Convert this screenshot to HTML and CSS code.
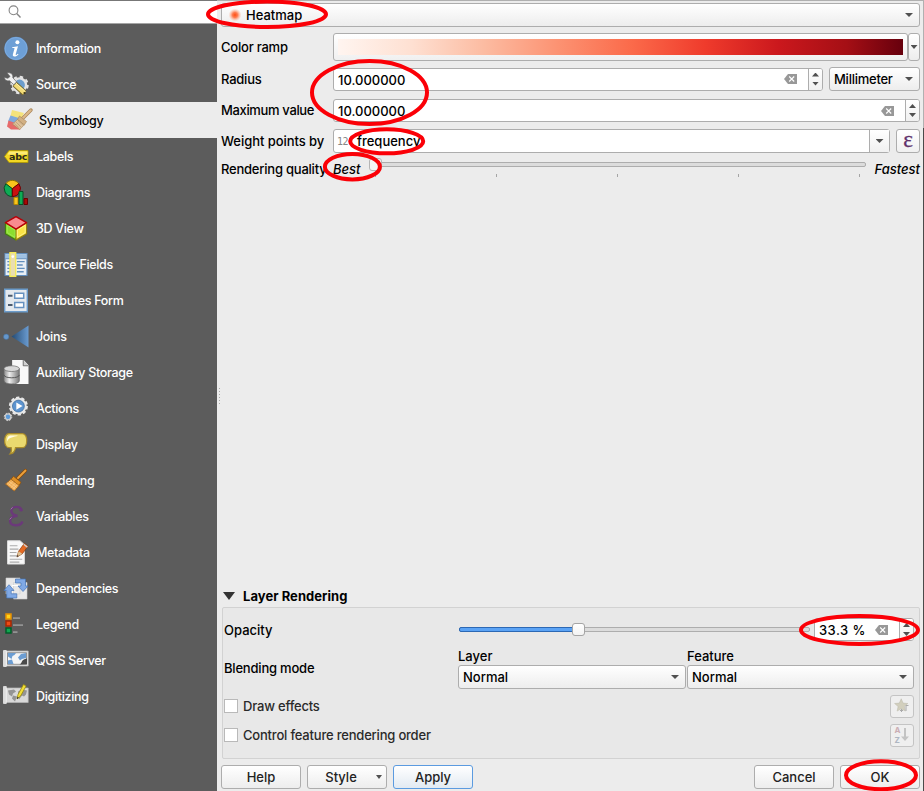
FILE: index.html
```
<!DOCTYPE html>
<html lang="en">
<head>
<meta charset="utf-8">
<title>Layer Properties</title>
<link rel="stylesheet" href="styles.css">
</head>
<body>
<svg class="defs" width="0" height="0" aria-hidden="true">
  <defs>
    <linearGradient id="gj"><stop offset="0" stop-color="#244b74"/><stop offset="1" stop-color="#6a9bd0"/></linearGradient>
    <linearGradient id="gc"><stop offset="0" stop-color="#8b8b8b"/><stop offset=".35" stop-color="#eee"/><stop offset="1" stop-color="#777"/></linearGradient>
    <radialGradient id="gh"><stop offset="0" stop-color="#ff4d12"/><stop offset=".4" stop-color="#ff7040" stop-opacity=".9"/><stop offset="1" stop-color="#ffb090" stop-opacity="0"/></radialGradient>
    <symbol id="clear" viewBox="0 0 13 10"><path d="M4 0H13V10H4L0 5Z" fill="#989898"/><path d="M5.2 2.5l5 5M10.2 2.5l-5 5" stroke="#fff" stroke-width="1.1"/></symbol>
  </defs>
</svg>
<div class="window">
  <nav class="sidebar">
    <div class="search"><svg width="14" height="14" viewBox="0 0 14 14" fill="none" stroke="#858585"><circle cx="5.5" cy="5.3" r="4.4" stroke-width="1.1"/><path d="M8.7 8.6l3.8 3.9" stroke-width="1.4"/></svg></div>
    <ul class="pages">
      <li><svg class="ico" viewBox="0 0 24 24"><circle cx="12" cy="12" r="11.7" fill="#5b8fcb"/><circle cx="12" cy="12" r="11" fill="#6d9fd6" stroke="#85b0df" stroke-width=".8"/><circle cx="13.4" cy="5.8" r="2" fill="#fff"/><path d="M8.2 10.8l5.8-1-2.3 8c-.2 1 .5 1 2.2-.5l.6.7c-2 2.3-6.5 3.2-5.6-.2l1.6-5.7c.2-.6-.5-.7-2.3-.5z" fill="#fff"/></svg><span>Information</span></li>
      <li><svg class="ico" viewBox="0 0 24 24"><circle cx="15.5" cy="12.5" r="6.6" fill="#6c9dcc" stroke="#e3e3e3" stroke-width="2.4"/><circle cx="15.5" cy="12.5" r="8.2" fill="none" stroke="#e3e3e3" stroke-width="2" stroke-dasharray="3.4 3.04"/><path d="M10.5 11.5l10 9" stroke="#7a6928" stroke-width="6"/><path d="M11 12l9.5 8.5" stroke="#f3dc78" stroke-width="4.2"/><path d="M11.5 10.2l9.3 8.4" stroke="#fff2ac" stroke-width="1"/><circle cx="20.5" cy="20.5" r="1.1" fill="#413713"/><path d="M3 .5C7-.5 9.3 2 8.8 5.2l3.8 4.2-2.8 2.8-4.3-4C2.7 9 .5 7.2.2 5l3.7.8 2.2-1.9z" fill="#f0f0f0" stroke="#666" stroke-width=".7"/></svg><span>Source</span></li>
      <li class="selected"><svg class="ico" viewBox="0 0 24 24"><path d="M5 1.5l12 3-4 8-10-3z" fill="#f5e37b"/><path d="M3.5 7l10 3-3 6L1 13z" fill="#7fa9dd"/><path d="M1.5 12l9 3.5 3 5.5H4L0 18z" fill="#e66a6a"/><path d="M16 9.5L24 1.5" stroke="#a88457" stroke-width="3.4" stroke-linecap="round"/><path d="M16 9.5L23.7 1.8" stroke="#dcb98b" stroke-width="2.2" stroke-linecap="round"/><path d="M12.5 7.5l7 5.5-2.2 3.5L10.5 11z" fill="#d2b083" stroke="#a88457" stroke-width=".6"/><path d="M10.5 11l6.7 5.4-4.5 4.6-7.2-5.4z" fill="#dcc09a" stroke="#a88457" stroke-width=".6"/><path d="M9 13.5l5 5M7.2 15l4.5 4M11 12l5 4.7" stroke="#b6946a" stroke-width=".6"/></svg><span>Symbology</span></li>
      <li><svg class="ico" viewBox="0 0 24 24"><path d="M5 6h19v12H5L.5 12z" fill="#f2d724" stroke="#b39a00" stroke-width=".8"/><path d="M5.5 7h18v3h-20z" fill="#fff08a" opacity=".8"/><text x="14" y="15.4" text-anchor="middle" class="abc">abc</text></svg><span>Labels</span></li>
      <li><svg class="ico" viewBox="0 0 24 24"><g stroke-width="1"><path d="M8.3 8.2L1.8 3.2A8 8 0 0 1 14.8 3.2z" fill="#f9c51c" stroke="#8d7300"/><path d="M8.3 8.2V16A8 8 0 0 1 1.8 3.2z" fill="#0eac55" stroke="#074f27"/><path d="M8.3 8.2V16A8 8 0 0 0 14.8 3.2z" fill="#ca1010" stroke="#690000"/><path d="M10 17h4v7h-4z" fill="#f9c51c" stroke="#b98900"/><path d="M15 11h4v13h-4z" fill="#0eac55" stroke="#074f27"/><path d="M20 18h3.5v6H20z" fill="#a80808" stroke="#690000"/></g></svg><span>Diagrams</span></li>
      <li><svg class="ico" viewBox="0 0 24 26"><g stroke-width="1.2" stroke-linejoin="round"><path d="M1 7l11 6.5V25L1 18.5z" fill="#8bdd2e" stroke="#417e10"/><path d="M23 7l-11 6.5V25l11-6.5z" fill="#fae345" stroke="#94800b"/><path d="M12 .7L23 7l-11 6.7L1 7z" fill="#f88b8e" stroke="#b80008" stroke-width="1.5"/><path d="M3 9.7l8 5v7.5l-8-4.8z" fill="none" stroke="#a7ed60" stroke-width=".7"/><path d="M21.5 9.7l-8 5v7.5l8-4.8z" fill="none" stroke="#fff6a2" stroke-width=".7"/></g></svg><span>3D View</span></li>
      <li><svg class="ico" viewBox="0 0 24 26"><path d="M.6 1.6h22.8v22.8H.6z" fill="#e9eff5" stroke="#628fbe" stroke-width="1.2"/><path d="M1.2 2.2h21.6v4.6H1.2z" fill="#9fc1e3"/><path d="M1 7h22" stroke="#628fbe"/><path d="M3 10h3M13 10h8M3 13.5h3M13 13.5h6M3 17h3M13 17h8M3 20.5h3M13 20.5h7" stroke="#628fbe" stroke-width="1.4"/><path d="M5.7.7h6v24.6h-6z" fill="#e9deb0" stroke="#f6ec55" stroke-width="1.4"/><circle cx="8.7" cy="4.8" r="1.4" fill="#fff"/></svg><span>Source Fields</span></li>
      <li><svg class="ico" viewBox="0 0 24 24"><path d="M.7.7h22.6v22.6H.7z" fill="#e4e9ee" stroke="#6b9bca" stroke-width="1.4"/><path d="M10.7 4.7h9v5h-9zM10.7 13.9h9v5h-9z" fill="#fff" stroke="#6591c0" stroke-width="1.5"/><path d="M4 7.2h4.5M4 16.4h4.5" stroke="#4b5b6d" stroke-width="2"/></svg><span>Attributes Form</span></li>
      <li><svg class="ico" viewBox="0 0 24 24"><circle cx="2.2" cy="12.3" r="2.7" fill="#6697cb" stroke="#3f6d9c" stroke-width=".5"/><path d="M7.5 12L24.5 1v22z" fill="url(#gj)"/></svg><span>Joins</span></li>
      <li><svg class="ico" viewBox="0 0 24 26"><path d="M8 0h12l5 5.5V25H8z" fill="#f9f9f9"/><path d="M19.5 0v6H25" fill="#d0d0d0" stroke="#555" stroke-width=".8"/><path d="M-.5 9v12.5c0 4.5 16 4.5 16 0V9z" fill="url(#gc)" stroke="#656565" stroke-width=".7"/><ellipse cx="7.5" cy="9" rx="8" ry="3" fill="#d8d8d8" stroke="#666" stroke-width=".7"/><path d="M-.5 15.5c0 4 16 4 16 0" fill="none" stroke="#555"/></svg><span>Auxiliary Storage</span></li>
      <li><svg class="ico" viewBox="0 0 24 26"><circle cx="14.5" cy="10.5" r="7.3" fill="#6296cc" stroke="#e8e8e8" stroke-width="2.6"/><circle cx="14.5" cy="10.5" r="8.9" fill="none" stroke="#e8e8e8" stroke-width="2" stroke-dasharray="3.5 2.1"/><circle cx="14.5" cy="10.5" r="6.2" fill="#5d94cf" stroke="#39699a" stroke-width=".7"/><path d="M12.3 6.7l6.5 3.8-6.5 3.8z" fill="#fff"/><circle cx="3.7" cy="21.7" r="3" fill="#5d9bd8" stroke="#cfcfcf" stroke-width="1.3"/><circle cx="3.7" cy="21.7" r="3.9" fill="none" stroke="#ddd" stroke-dasharray="1.7 1.36"/></svg><span>Actions</span></li>
      <li><svg class="ico" viewBox="0 0 24 24"><path d="M5 1.2h13.5c6 0 5.3 14 0 14h-7c-.5 3.5-3 6-5.5 6.3 1.6-1.7 1.7-4 1.2-6.3H5C-.8 15.2-.8 1.2 5 1.2z" fill="#ead96f" stroke="#aa8c2a" stroke-width="1.2"/><path d="M3 9c0-4 1-6 4-6h7c-4 2-9 1-11 6z" fill="#fffbe0"/></svg><span>Display</span></li>
      <li><svg class="ico" viewBox="0 0 24 24"><path d="M14 9.5L21.5 2" stroke="#8a4a05" stroke-width="3.2" stroke-linecap="round"/><path d="M14 9.5L21.5 2" stroke="#eba03c" stroke-width="1.9" stroke-linecap="round"/><path d="M9.5 7.8l7.5 6-2 3.3-8-6.4z" fill="#de8f25" stroke="#8a4a05" stroke-width=".7"/><path d="M7 10.7l8 6.4-4.7 5.4-8.8-7z" fill="#f1ae55" stroke="#a8671a" stroke-width=".8"/><path d="M3.2 14.3l8.3 6.4M5 12.8l8 6.3M9.3 12.6L4.8 17M11.5 14.4L7 19.2M13.2 16l-4.5 5" stroke="#fad096" stroke-width=".6"/></svg><span>Rendering</span></li>
      <li><svg class="ico" viewBox="0 0 24 24"><path d="M17.8 6.4C17 .9 7.4 1.3 7.4 6.3c0 3 2.6 4.6 6.1 4.9-4.6.3-7.4 2-7.4 5.4 0 5.3 10.4 5.6 12.4.4" fill="none" stroke="#6b397a" stroke-width="2.4"/><circle cx="16.9" cy="5.5" r="1.5" fill="#6b397a"/><path d="M6.8 4.8l1.8-2M5.6 14.8l2-1.8" stroke="#a983b2" stroke-width=".8"/></svg><span>Variables</span></li>
      <li><svg class="ico" viewBox="0 0 24 26"><path d="M3.2.8h13l4.5 4V25H3.2z" fill="#f8f8f8" stroke="#ddd"/><path d="M5.5 6h8M5.5 9.5h9M5.5 13h7M5.5 16.5h8M5.5 20h13M5.5 23h10" stroke="#aaa" stroke-width="1.2"/><path d="M13 17.7l1.7-6 6-8.3 3.8 3-6 8z" fill="#e56a24" stroke="#813708" stroke-width=".7"/><path d="M13 17.7l1.7-6 3.8 2.7z" fill="#ddc497"/><path d="M20 4.4l3.8 3" stroke="#ccc" stroke-width="1.5"/><path d="M13 17.7l.5-2 1.3 1z" fill="#222"/></svg><span>Metadata</span></li>
      <li><svg class="ico" viewBox="0 0 24 24"><path d="M2 1.5h14v16H2zM9.5 6H23v16.5H9.5z" fill="#e8e8e8" stroke="#ccc" stroke-width=".6"/><path d="M8 18V9h8" stroke="#fff" fill="none"/><g fill="#80a9e5" stroke="#4373b6" stroke-width=".7"><path d="M11.5 2.5h10v7H24l-5 5.5-5-5.5h3V6.5h-5.5z"/><path d="M12.8 21.5H2.7V14H0l5-5.8 5 5.8H7.2v3.3h5.6z"/></g></svg><span>Dependencies</span></li>
      <li><svg class="ico" viewBox="0 0 24 24"><path d="M2 1.5h5v5H2z" fill="#ffd21c" stroke="#e89100" stroke-width="1.5"/><path d="M2 8.5h5v5H2z" fill="#ed4b16" stroke="#a92800" stroke-width="1.5"/><path d="M2 15.5h5v5H2z" fill="#10a650" stroke="#005e29" stroke-width="1.5"/><path d="M9 5.7h7M9 12.7h10M9 19.7h4.5" stroke="#929292" stroke-width="1.8"/></svg><span>Legend</span></li>
      <li><svg class="ico" viewBox="0 0 24 24"><path d="M.2 2.5h24v15H.2z" fill="#e4e4e4" stroke="#b8b8b8" stroke-width=".7"/><path d="M3.5 4.2h19v11.6h-19z" fill="#f5f5f5" stroke="#555" stroke-width=".6"/><path d="M4 4.5h8l-1.5 2-2 1-1 3L4 8zM4 12l4-1 1.5 4.5H4zM14 9l3-3.5 5-1v5l-4 1-2 1.5z" fill="#6c9dd2"/><path d="M15.5 16c3-1 1-5 7.5-6v5.8z" fill="#4a4a4a"/><path d="M-.5 2h2.8v16H-.5z" fill="#ddd" stroke="#fff" stroke-width=".6"/></svg><span>QGIS Server</span></li>
      <li><svg class="ico" viewBox="0 0 24 24"><path d="M.2 3.5h24v14.5H.2z" fill="#d9d9d9" stroke="#b8b8b8" stroke-width=".7"/><path d="M4 6l6-1 2 2-3 2-1 3-3-2zM9 11l4 1-2 5-3-3zM14 7l4-2 5 1-1 4-2 2-2-1-3 4-1-4z" fill="#949494"/><path d="M-.5 2h2.8v17H-.5z" fill="#ddd" stroke="#fff" stroke-width=".6"/><path d="M13 14.5l1-4.5 5.5-10 2.6 1.5-5.5 10z" fill="#f2df38" stroke="#978710" stroke-width=".8"/><path d="M13 14.5l.4-2 1.5.8z" fill="#222"/></svg><span>Digitizing</span></li>
    </ul>
  </nav>

  <main class="panel">
    <div class="box combo renderer"><svg width="14" height="14" viewBox="0 0 14 14"><circle cx="7" cy="7" r="6.5" fill="url(#gh)"/></svg><span>Heatmap</span><i class="arrow"></i></div>

    <div class="row ramp-row"><label>Color ramp</label>
      <div class="box ramp"><div class="gradient"></div></div><div class="box ramp-menu"><i class="arrow"></i></div></div>
    <div class="row radius-row"><label>Radius</label>
      <div class="box spin"><span>10.000000</span><svg class="clear"><use href="#clear"/></svg><div class="steps"><i class="up"></i><i class="down"></i></div></div>
      <div class="box combo unit"><span>Millimeter</span><i class="arrow"></i></div></div>
    <div class="row max-row"><label>Maximum value</label>
      <div class="box spin"><span>10.000000</span><svg class="clear"><use href="#clear"/></svg><div class="steps"><i class="up"></i><i class="down"></i></div></div></div>
    <div class="row weight-row"><label>Weight points by</label>
      <div class="box field"><small>12</small><span>frequency</span><div class="drop"><i class="arrow"></i></div></div>
      <div class="box expr">ε</div></div>
    <div class="row quality-row"><label>Rendering quality</label>
      <em class="best">Best</em>
      <div class="quality"><div class="groove"></div><div class="ticks"><i></i><i></i><i></i><i></i><i></i></div><div class="knob"></div></div>
      <em>Fastest</em></div>

    <div class="space"><i></i><i></i><i></i><i></i><i></i><i></i></div>

    <h2><i class="fold"></i>Layer Rendering</h2>
    <section class="group">
      <div class="opacity-row"><label>Opacity</label>
        <div class="slider"><div class="fill"></div><div class="handle"></div></div>
        <div class="box spin percent"><span>33.3 %</span><svg class="clear"><use href="#clear"/></svg><div class="steps"><i class="up"></i><i class="down"></i></div></div></div>
      <div class="blend-row"><label>Blending mode</label>
        <div class="blend layer"><span>Layer</span><div class="box combo"><span>Normal</span><i class="arrow"></i></div></div>
        <div class="blend feature"><span>Feature</span><div class="box combo"><span>Normal</span><i class="arrow"></i></div></div></div>
      <div class="check-row"><i class="check"></i><span>Draw effects</span>
        <div class="box tool"><svg width="16" height="16" viewBox="0 0 16 16"><path d="M7.2.8l1.9 4.3 4.7.4-3.5 3 1 4.6-4.1-2.4-4.1 2.4 1-4.6-3.5-3 4.7-.4z" fill="#d2cfbd" stroke="#bbb8aa" stroke-width=".5"/><path d="M6 12.5h3M7.5 11v3M12 13V7.5h2.5" stroke="#aaa" fill="none"/></svg></div></div>
      <div class="check-row"><i class="check"></i><span>Control feature rendering order</span>
        <div class="box tool"><div class="az"><b>A</b><b>Z</b></div><svg width="8" height="14" viewBox="0 0 8 14"><path d="M3 0v8.5H0l4 4.5 4-4.5H5V0z" fill="#c3c3c3"/></svg></div></div>
    </section>
    <footer class="actions">
      <div class="box button">Help</div>
      <div class="box button style"><span>Style</span><i class="arrow"></i></div>
      <div class="box button apply">Apply</div>
      <div class="box button cancel">Cancel</div>
      <div class="box button ok">OK</div>
    </footer>
  </main>
  <svg class="marks" viewBox="0 0 924 791" fill="none" stroke="#fb0007" stroke-width="4">
    <ellipse cx="267" cy="14.3" rx="59" ry="12.7"/>
    <ellipse cx="369.5" cy="92.5" rx="57.5" ry="31.5"/>
    <ellipse cx="386.7" cy="141.3" rx="36.5" ry="12"/>
    <ellipse cx="352.4" cy="166.7" rx="27.5" ry="12.7"/>
    <ellipse cx="859.5" cy="630" rx="58.5" ry="14"/>
    <ellipse cx="881" cy="775.2" rx="35" ry="14"/>
  </svg>
</div>
</body>
</html>
```
FILE: styles.css
```
* { box-sizing: border-box; }
body { margin: 0; overflow: hidden; font: 500 13px/16px Inter, "Liberation Sans", sans-serif; color: #000; }
i { display: block; }
.defs { position: absolute; }
.window { position: relative; display: flex; width: 924px; height: 791px; background: #ececec; }

.sidebar { width: 217px; flex: none; background: #5c5c5c; border-top: 1px solid #777; }
.search { height: 23px; background: #fff; border-bottom: 1px solid #a5a5a5; padding: 4px 0 0 8px; }
.search svg { display: block; }
.pages { list-style: none; margin: 6px 0 0; padding: 0; }
.pages li { display: flex; align-items: center; gap: 8px; height: 36px; padding-left: 4px; color: #fff; font-size: 12.5px; letter-spacing: -.32px; }
.pages .selected { background: #ececec; color: #000; padding-left: 7px; }
.pages span { padding-top: 2px; }
.ico { width: 24px; height: 25px; overflow: visible; flex: none; }
.abc { font: 700 9.5px "DejaVu Sans", sans-serif; letter-spacing: -.3px; fill: #2b2b1c; }

.panel { width: 707px; flex: none; padding: 2px 4px 0; display: flex; flex-direction: column; border: 0 solid; border-width: 1px 1px 0 0; border-image: linear-gradient(#b0b0b0 128px, #4a4a4a 128px) 1; }
.box { border: 1px solid #adadad; border-radius: 3px; background: #fff; display: flex; align-items: center; }
.combo, .ramp-menu, .button { background: linear-gradient(#fff, #ededed); }
.arrow { width: 8px; height: 4px; background: #505050; clip-path: polygon(0 0, 100% 0, 50% 100%); flex: none; }
.combo .arrow { margin: 0 6px 0 auto; }
.renderer { height: 24px; padding-left: 6px; gap: 4px; margin-right: -1px; }
.row { display: flex; align-items: center; margin-right: -1px; }
.row label { width: 112px; flex: none; white-space: nowrap; letter-spacing: -.22px; }
.row.weight-row label { letter-spacing: -.05px; }
.ramp-row { height: 28px; margin-top: 6px; }
.ramp { width: 575px; height: 28px; padding: 0 4px; background: linear-gradient(#fff, #f0f0f0); }
.gradient { flex: 1; height: 16px; background: linear-gradient(90deg, #fff5f0, #fee0d2 13%, #fcbba1 26%, #fc9272 39%, #fb6a4a 52%, #ef3b2c 65%, #cb181d 78%, #a50f15 90%, #67000d); }
.ramp-menu { width: 12px; height: 28px; justify-content: center; }
.ramp-menu .arrow { width: 7px; }
.radius-row { height: 24px; margin-top: 6px; }
.radius-row .spin span { padding-top: 1px; }
.spin { flex: 1; height: 23px; padding-left: 4px; }
.clear { width: 13px; height: 10px; margin-left: auto; margin-right: 11px; flex: none; }
.steps { width: 14px; height: 100%; border-left: 1px solid #adadad; background: linear-gradient(#fff, #f0f0f0); border-radius: 0 2px 2px 0; display: flex; flex-direction: column; align-items: center; justify-content: center; gap: 5px; }
.up, .down { width: 7px; height: 4px; background: #505050; clip-path: polygon(50% 0, 100% 100%, 0 100%); }
.down { clip-path: polygon(0 0, 100% 0, 50% 100%); }
.unit { width: 91px; height: 24px; margin-left: 6px; padding-left: 4px; letter-spacing: -.25px; }
.max-row { height: 23px; margin-top: 8px; }
.max-row label { padding-bottom: 1px; letter-spacing: -.35px; }
.weight-row { height: 24px; margin-top: 7px; }
.field { width: 557px; height: 24px; padding-left: 3px; }
.field small { font: 10px "DejaVu Sans Mono", monospace; color: #888; letter-spacing: -.4px; width: 20px; }
.drop { margin-left: auto; width: 20px; height: 100%; border-left: 1px solid #adadad; display: flex; align-items: center; justify-content: center; background: linear-gradient(#fff, #f0f0f0); }
.expr { width: 24px; height: 24px; margin-left: 6px; justify-content: center; background: linear-gradient(#fff, #f0f0f0); color: #60316b; font: 23px/20px "Liberation Serif", serif; padding-bottom: 3px; -webkit-text-stroke: .3px #60316b; }
.quality-row { height: 24px; margin-top: 5px; align-items: flex-start; }
.quality-row label, .quality-row em { padding-top: 3px; }
.best { width: 37px; }
.quality { position: relative; width: 498px; height: 22px; margin-right: 8px; padding-top: 4px; }
.groove { height: 5px; border: 1px solid #adadad; border-radius: 2px; background: #dcdcdc; }
.ticks { display: flex; justify-content: space-between; margin: 7px 6px 0 5px; }
.ticks i { width: 1px; height: 3px; background: #a5a5a5; }
.knob { position: absolute; left: -1px; top: 0; width: 13px; height: 13px; border: 1px solid #b5b5b5; border-radius: 3px; background: #f5f5f5; }
.space { flex: 1; margin-left: -2px; padding-top: 24px; display: flex; flex-direction: column; justify-content: center; gap: 2px; }
.space i { width: 1px; height: 1px; background: #aaa; }

h2 { margin: 0 0 1px; height: 20px; display: flex; align-items: center; font-size: 13px; font-weight: 700; letter-spacing: .05px; padding-left: 2px; }
.fold { width: 12px; height: 8px; margin-right: 8px; background: #333; clip-path: polygon(0 0, 100% 0, 50% 100%); }
.group { height: 152px; margin-left: 1px; width: 698px; border: 1px solid #d2d2d2; border-radius: 2px; background: #e8e8e8; padding: 10px 5px 0 1px; flex: none; }
.opacity-row { display: flex; align-items: center; height: 23px; }
.opacity-row label { width: 235px; }
.percent { letter-spacing: .45px; }
.slider { position: relative; width: 351px; height: 5px; border: 1px solid #adadad; border-radius: 2px; background: #dcdcdc; margin-right: 4px; }
.fill { position: absolute; left: -1px; top: -1px; width: 118px; height: 5px; border: 1px solid #2c68b4; border-radius: 2px; background: #5ba3f5; }
.handle { position: absolute; left: 112px; top: -5px; width: 13px; height: 13px; border: 1px solid #a5a5a5; border-radius: 3px; background: linear-gradient(#fff, #f3f3f3); }
.blend-row { display: flex; height: 46px; margin-top: 7px; gap: 1px; }
.blend-row label { width: 233px; padding-top: 12px; letter-spacing: -.2px; }
.blend { width: 228px; }
.blend > span { display: block; height: 17px; }
.blend .box { height: 24px; padding-left: 4px; }
.feature { width: 227px; }
.check-row { display: flex; align-items: center; height: 24px; margin-bottom: 5px; color: #2a2a2a; letter-spacing: -.2px; }
.check { width: 14px; height: 14px; border: 1px solid #b9b9b9; background: #fff; margin-right: 5px; }
.tool { width: 24px; height: 23px; margin-left: auto; justify-content: center; background: #efefef; border-color: #c4c4c4; }
.az { display: grid; margin-right: 1px; }
.az b { font: 700 8px/10px Inter, sans-serif; color: #cbaeb5; }
.az b + b { color: #aeb6c2; }
.actions { height: 24px; margin: 6px -1px 2px 0; display: flex; gap: 6px; flex: none; color: #222; }
.button { width: 80px; height: 24px; justify-content: center; }
.style { position: relative; padding-right: 12px; }
.style .arrow { position: absolute; right: 4px; top: 9px; width: 6px; }
.apply { border-color: #5b9be0; background: linear-gradient(#fff, #e2eaf2); }
.cancel { margin-left: auto; }
.marks { position: absolute; left: 0; top: 0; width: 924px; height: 791px; pointer-events: none; }
```
